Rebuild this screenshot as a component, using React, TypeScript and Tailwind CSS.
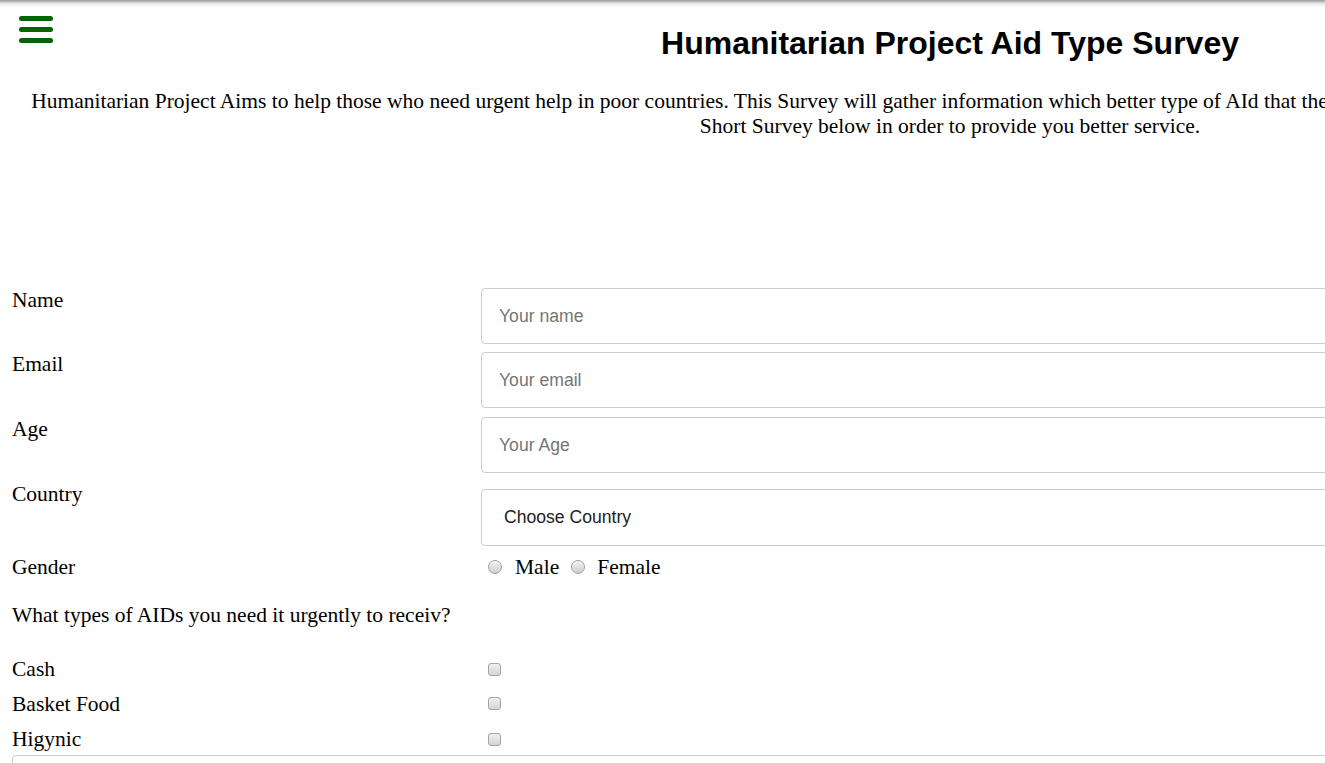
import React from "react";

function Radio() {
  return (
    <span className="inline-block h-[14px] w-[14px] shrink-0 rounded-full border border-[#a0a0a0] bg-gradient-to-b from-[#f2f2f2] to-[#cfcfcf] shadow-[inset_0_1px_1px_rgba(255,255,255,0.8)]" />
  );
}

function Check() {
  return (
    <span className="ml-[7px] inline-block h-[13px] w-[13px] shrink-0 rounded-[3px] border border-[#a4a4a4] bg-gradient-to-b from-[#f0f0f0] to-[#d4d4d4]" />
  );
}

export default function App() {
  const inputCls =
    "flex h-[56px] w-full items-center rounded-[4px] border border-[#cccccc] bg-white pl-[17px] font-['Liberation_Sans',Arial,sans-serif] text-[17.6px] text-[#757575]";
  return (
    <div className="relative h-[763px] w-full overflow-hidden bg-white font-['Liberation_Serif','Times_New_Roman',serif] text-black">
      <div className="pointer-events-none absolute inset-x-0 top-0 z-10 h-[7px] bg-gradient-to-b from-black/40 via-black/10 to-transparent" />
      <div className="w-[1900px]">
        <header className="relative">
          <button
            type="button"
            aria-label="menu"
            className="absolute left-[19px] top-[16px] flex flex-col gap-[6px]"
          >
            <span className="block h-[5px] w-[34px] rounded-full bg-[#006400]" />
            <span className="block h-[5px] w-[34px] rounded-full bg-[#006400]" />
            <span className="block h-[5px] w-[34px] rounded-full bg-[#006400]" />
          </button>
          <h1 className="pt-[25px] text-center font-['Liberation_Sans',Arial,sans-serif] text-[32px] font-bold leading-[37px]">
            Humanitarian Project Aid Type Survey
          </h1>
        </header>

        <p className="mt-[27px] text-center text-[21.5px] leading-[25px]">
          <span className="whitespace-nowrap">
            Humanitarian Project Aims to help those who need urgent help in poor countries. This Survey will gather information which better type of AId that they need, so we kindly ask you to please fill out all the following
          </span>
          <br />
          Short Survey below in order to provide you better service.
        </p>

        <form className="mt-[149px] px-[12px] text-[21.5px] leading-[24.7px]">
          <div className="flex h-[64px] items-start">
            <label className="w-[469px] shrink-0">Name</label>
            <div className="flex-1">
              <div className={inputCls}>Your name</div>
            </div>
          </div>
          <div className="flex h-[65px] items-start">
            <label className="w-[469px] shrink-0">Email</label>
            <div className="flex-1">
              <div className={inputCls}>Your email</div>
            </div>
          </div>
          <div className="flex h-[65px] items-start">
            <label className="w-[469px] shrink-0">Age</label>
            <div className="flex-1">
              <div className={inputCls}>Your Age</div>
            </div>
          </div>
          <div className="flex h-[73px] items-start">
            <label className="w-[469px] shrink-0">Country</label>
            <div className="flex-1 pt-[7px]">
              <div className="flex h-[57px] w-full items-center rounded-[4px] border border-[#cccccc] bg-white pl-[22px] font-['Liberation_Sans',Arial,sans-serif] text-[17.6px] text-[#222222]">
                Choose Country
              </div>
            </div>
          </div>
          <div className="flex h-[47.5px] items-start">
            <label className="w-[469px] shrink-0">Gender</label>
            <div className="flex flex-1 items-center pl-[7px]">
              <Radio />
              <span className="ml-[13px]">Male</span>
              <span className="ml-[12px] flex"><Radio /></span>
              <span className="ml-[12px]">Female</span>
            </div>
          </div>
          <div className="h-[54.5px]">What types of AIDs you need it urgently to receiv?</div>
          <div className="flex h-[34.5px] items-start">
            <label className="w-[469px] shrink-0">Cash</label>
            <div className="flex h-[24.7px] flex-1 items-center"><Check /></div>
          </div>
          <div className="flex h-[35.5px] items-start">
            <label className="w-[469px] shrink-0">Basket Food</label>
            <div className="flex h-[24.7px] flex-1 items-center"><Check /></div>
          </div>
          <div className="flex h-[28px] items-start">
            <label className="w-[469px] shrink-0">Higynic</label>
            <div className="flex h-[24.7px] flex-1 items-center"><Check /></div>
          </div>
          <div className="h-[120px] w-full rounded-[4px] border border-[#cccccc] bg-white" />
        </form>
      </div>
    </div>
  );
}
